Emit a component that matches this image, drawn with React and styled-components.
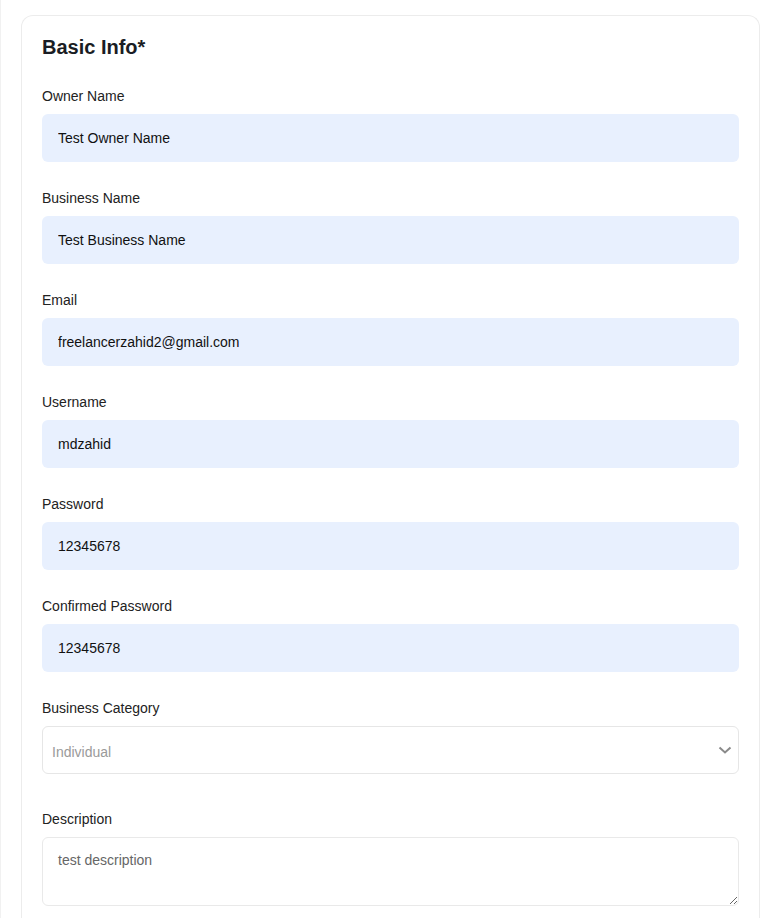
import React from "react";
import styled, { createGlobalStyle } from "styled-components";

const Global = createGlobalStyle`
  html, body { margin: 0; padding: 0; background: #ffffff; }
  body { font-family: "Liberation Sans", Arial, sans-serif; color: #1f1f1f; }
  * { box-sizing: border-box; }
`;

const Page = styled.div`
  min-height: 918px;
  border-left: 1px solid #f1f1f1;
  padding: 15px 11px 0 20px;
`;

const Card = styled.section`
  border: 1px solid #ececec;
  border-bottom: none;
  border-radius: 12px 12px 0 0;
  padding: 20px 20px 40px;
  background: #fff;
`;

const Title = styled.h2`
  margin: 0 0 29px;
  font-size: 20px;
  line-height: 23px;
  font-weight: 700;
  color: #1a1d24;
`;

const Form = styled.div`
  display: flex;
  flex-direction: column;
  gap: 28px;
`;

const Field = styled.div`
  display: flex;
  flex-direction: column;
  margin-bottom: ${(p) => (p.$extra ? "9px" : "0")};
`;

const Label = styled.label`
  display: block;
  font-size: 14px;
  line-height: 16px;
  margin-bottom: 10px;
  color: #222;
`;

const Input = styled.input`
  height: 48px;
  border: none;
  border-radius: 6px;
  background: #e8f0fe;
  padding: 0 16px;
  font-family: inherit;
  font-size: 14px;
  color: #111;
  outline: none;
  width: 100%;
`;

const SelectWrap = styled.div`
  position: relative;
  height: 48px;
  border: 1px solid #e6e6e6;
  border-radius: 6px;
  display: flex;
  align-items: center;
  padding: 3px 9px 0;
  font-size: 14px;
  color: #9a9a9a;
`;

const Chevron = styled.svg`
  position: absolute;
  right: 6px;
  top: 50%;
  transform: translateY(-50%);
`;

const TextArea = styled.textarea`
  height: 69px;
  border: 1px solid #e9e9e9;
  border-radius: 6px;
  padding: 14px 15px 12px;
  font-family: inherit;
  font-size: 14px;
  line-height: 16px;
  color: #666;
  outline: none;
  resize: vertical;
  width: 100%;
`;

const fields = [
  ["Owner Name", "Test Owner Name"],
  ["Business Name", "Test Business Name"],
  ["Email", "freelancerzahid2@gmail.com"],
  ["Username", "mdzahid"],
  ["Password", "12345678"],
  ["Confirmed Password", "12345678"],
];

export default function App() {
  return (
    <>
      <Global />
      <Page>
        <Card>
          <Title>Basic Info*</Title>
          <Form>
            {fields.map(([label, value]) => (
              <Field key={label}>
                <Label>{label}</Label>
                <Input defaultValue={value} readOnly />
              </Field>
            ))}
            <Field $extra>
              <Label>Business Category</Label>
              <SelectWrap>
                Individual
                <Chevron width="14" height="14" viewBox="0 0 14 14" fill="none">
                  <path d="M1.5 4.5 L7 9.5 L12.5 4.5" stroke="#8a8a8a" strokeWidth="2" />
                </Chevron>
              </SelectWrap>
            </Field>
            <Field>
              <Label>Description</Label>
              <TextArea defaultValue="test description" readOnly />
            </Field>
          </Form>
        </Card>
      </Page>
    </>
  );
}
